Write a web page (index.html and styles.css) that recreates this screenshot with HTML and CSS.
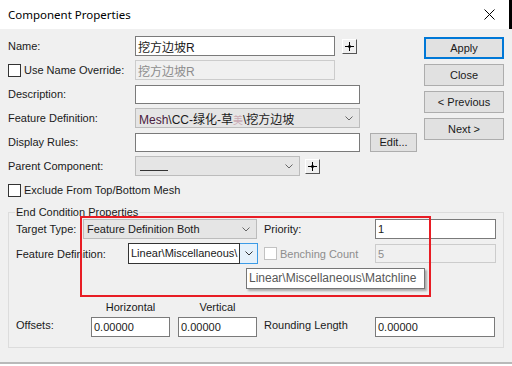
FILE: index.html
```html
<!DOCTYPE html>
<html lang="en">
<head>
    <meta charset="UTF-8">
    <meta name="viewport" content="width=device-width, initial-scale=1.0">
    <title>Component Properties</title>
    <link rel="stylesheet" href="styles.css">
</head>
<body>
    <div class="window">
        <div class="titlebar">
            <span class="title">Component Properties</span>
            <span class="close">
                <svg width="11" height="11" viewBox="0 0 11 11"><path d="M0.5 0.5 L10.5 10.5 M10.5 0.5 L0.5 10.5" stroke="#000" stroke-width="1"/></svg>
            </span>
        </div>

        <div class="dialog">
            <div class="main">
                <div class="form">
                    <div class="row">
                        <span class="label">Name:</span>
                        <div class="input w200 cjk">挖方边坡R</div>
                        <button class="pick pick-lg">
                            <svg width="9" height="9" viewBox="0 0 9 9"><path d="M4.5 0 V9 M0 4.5 H9" stroke="#000" stroke-width="1"/><path d="M4.5 2.5 L6.5 4.5 L4.5 6.5 L2.5 4.5 Z" fill="#000"/></svg>
                        </button>
                    </div>
                    <div class="row">
                        <label class="check label"><span class="box"></span>Use Name Override:</label>
                        <div class="input w200 disabled cjk">挖方边坡R</div>
                    </div>
                    <div class="row">
                        <span class="label">Description:</span>
                        <div class="input w225"></div>
                    </div>
                    <div class="row">
                        <span class="label">Feature Definition:</span>
                        <div class="select w225">
                            <span class="cjk"><span class="mesh">Mesh</span>\CC-绿化-草<span class="faint">美</span>\挖方边坡</span>
                            <svg class="chev" width="8" height="5" viewBox="0 0 8 5"><polyline points="0.5,0.5 4,4 7.5,0.5" fill="none" stroke="#666"/></svg>
                        </div>
                    </div>
                    <div class="row">
                        <span class="label">Display Rules:</span>
                        <div class="input w225"></div>
                        <button class="btn edit">Edit...</button>
                    </div>
                    <div class="row">
                        <span class="label">Parent Component:</span>
                        <div class="select w165">
                            <span class="blank"></span>
                            <svg class="chev" width="8" height="5" viewBox="0 0 8 5"><polyline points="0.5,0.5 4,4 7.5,0.5" fill="none" stroke="#666"/></svg>
                        </div>
                        <button class="pick">
                            <svg width="9" height="9" viewBox="0 0 9 9"><path d="M4.5 0 V9 M0 4.5 H9" stroke="#000" stroke-width="1"/><path d="M4.5 2.5 L6.5 4.5 L4.5 6.5 L2.5 4.5 Z" fill="#000"/></svg>
                        </button>
                    </div>
                    <div class="row">
                        <label class="check"><span class="box"></span>Exclude From Top/Bottom Mesh</label>
                    </div>
                </div>

                <div class="actions">
                    <button class="btn default">Apply</button>
                    <button class="btn">Close</button>
                    <button class="btn">&lt; Previous</button>
                    <button class="btn">Next &gt;</button>
                </div>
            </div>

            <fieldset class="group">
                <legend>End Condition Properties</legend>
                <div class="grow grow-a">
                    <div class="gleft">
                        <span class="glabel w67">Target Type:</span>
                        <div class="select w174 h20">
                            <span>Feature Definition Both</span>
                            <svg class="chev" width="8" height="5" viewBox="0 0 8 5"><polyline points="0.5,0.5 4,4 7.5,0.5" fill="none" stroke="#666"/></svg>
                        </div>
                    </div>
                    <span class="glabel w111">Priority:</span>
                    <div class="input w121 h20">1</div>
                </div>
                <div class="grow grow-b">
                    <div class="gleft">
                        <span class="glabel w112">Feature Definition:</span>
                        <div class="combo">
                            <div class="combo-edit">Linear\Miscellaneous\</div>
                            <div class="combo-btn">
                                <svg width="8" height="5" viewBox="0 0 8 5"><polyline points="0.5,0.5 4,4 7.5,0.5" fill="none" stroke="#333"/></svg>
                            </div>
                        </div>
                    </div>
                    <label class="check glabel w111 off"><span class="box"></span>Benching Count</label>
                    <div class="input w121 disabled">5</div>
                </div>
                <div class="heads">
                    <span class="head">Horizontal</span>
                    <span class="head">Vertical</span>
                </div>
                <div class="grow grow-e">
                    <div class="gleft">
                        <span class="glabel w75 lift">Offsets:</span>
                        <div class="input w79 h20">0.00000</div>
                        <div class="input w79 h20">0.00000</div>
                    </div>
                    <span class="glabel w111 lift">Rounding Length</span>
                    <div class="input w120 h20">0.00000</div>
                </div>
            </fieldset>
        </div>

        <div class="highlight"></div>
        <div class="tooltip">Linear\Miscellaneous\Matchline</div>
    </div>
</body>
</html>
```

FILE: styles.css
```css
body {
    margin: 0;
    background-color: #fff;
    font-family: 'Liberation Sans', 'Noto Sans CJK SC', sans-serif;
    font-size: 11px;
    color: #1a1a1a;
}
.window {
    position: relative;
    width: 512px;
    height: 366px;
    overflow: hidden;
}
.titlebar {
    height: 29px;
    display: flex;
    align-items: center;
    justify-content: space-between;
    padding-left: 8px;
    box-sizing: border-box;
    border-right: 3px solid #000;
    background-color: #fff;
}
.title {
    font-family: 'Noto Sans', sans-serif;
    font-size: 11.5px;
    color: #000;
}
.close {
    display: flex;
    margin-right: 14px;
}
.dialog {
    height: 335px;
    box-sizing: border-box;
    padding: 5px 8px 0 8px;
    background-color: #f0f0f0;
    border-bottom: 2px solid #b9b9b9;
}
.main {
    display: flex;
}
.form {
    width: 416px;
}
.row {
    height: 24px;
    display: flex;
    align-items: center;
}
.label {
    width: 127px;
    flex-shrink: 0;
}
.check {
    display: flex;
    align-items: center;
}
.box {
    width: 11px;
    height: 11px;
    border: 1px solid #333;
    background-color: #fff;
    margin-right: 3px;
}
.off {
    color: #8d8d8d;
}
.off .box {
    border-color: #c2c2c2;
}
.input {
    height: 19px;
    box-sizing: border-box;
    border: 1px solid #7a7a7a;
    background-color: #fff;
    padding-left: 2px;
    display: flex;
    align-items: center;
    white-space: nowrap;
    overflow: hidden;
}
.input.disabled {
    background-color: #f0f0f0;
    border-color: #cccccc;
    color: #8d8d8d;
}
.cjk {
    font-size: 12px;
}
.h20 { height: 20px; }
.w200 { width: 200px; height: 20px; }
.w225 { width: 225px; }
.w165 { width: 165px; }
.w174 { width: 174px; }
.w121 { width: 121px; }
.w120 { width: 120px; }
.w79 { width: 79px; }
.select {
    height: 20px;
    box-sizing: border-box;
    border: 1px solid #bcbcbc;
    background-color: #e5e5e5;
    padding: 0 6px 0 3px;
    display: flex;
    align-items: center;
    justify-content: space-between;
    white-space: nowrap;
}
.mesh {
    color: #4a2040;
}
.faint {
    color: #c9a9b4;
    font-size: 10px;
}
.blank {
    width: 28px;
    height: 9px;
    margin-left: 1px;
    border-bottom: 1px solid #333;
}
.chev {
    flex-shrink: 0;
}
.pick {
    width: 15px;
    height: 15px;
    margin-left: 5px;
    padding: 0;
    display: flex;
    align-items: center;
    justify-content: center;
    background-color: #f0f0f0;
    border: 1px solid;
    border-color: #fff #555 #555 #fff;
}
.pick-lg {
    margin-left: 7px;
}
.btn {
    height: 22px;
    padding: 0;
    font-family: inherit;
    font-size: 11px;
    color: #1a1a1a;
    background-color: #e1e1e1;
    border: 1px solid #adadad;
}
.btn.default {
    border-color: #0078d7;
    box-shadow: inset 0 0 0 1px #0078d7;
}
.edit {
    width: 47px;
    height: 19px;
    margin-left: 10px;
}
.actions {
    width: 80px;
    padding-top: 3px;
    display: flex;
    flex-direction: column;
    gap: 5px;
}
.group {
    margin: 4px 0 0 0;
    padding: 0 7px 10px 7px;
    border: 1px solid #dcdcdc;
    width: 496px;
    box-sizing: border-box;
}
.group legend {
    padding: 0 1px;
    margin-left: -1px;
    line-height: 13px;
}
.grow {
    display: flex;
    align-items: center;
}
.grow-a {
    height: 20px;
}
.grow-b {
    height: 21px;
    margin-top: 4px;
}
.grow-e {
    height: 20px;
    margin-top: 3px;
}
.gleft {
    width: 248px;
    display: flex;
    align-items: center;
}
.glabel {
    flex-shrink: 0;
}
.lift {
    margin-top: -5px;
}
.w67 { width: 67px; }
.w75 { width: 75px; }
.w111 { width: 111px; }
.w112 { width: 112px; }
.grow-e .gleft .input + .input {
    margin-left: 8px;
}
.combo {
    display: flex;
    height: 21px;
}
.combo-edit {
    width: 112px;
    box-sizing: border-box;
    border: 1px solid #333;
    background-color: #fff;
    padding-left: 2px;
    line-height: 19px;
    white-space: nowrap;
    overflow: hidden;
}
.combo-btn {
    width: 18px;
    box-sizing: border-box;
    border: 1px solid #3c9be6;
    border-left: none;
    background-color: #e5f1fb;
    display: flex;
    align-items: center;
    justify-content: center;
}
.heads {
    display: flex;
    margin: 36px 0 0 75px;
    gap: 8px;
    height: 14px;
    align-items: center;
}
.head {
    width: 79px;
    text-align: center;
}
.highlight {
    position: absolute;
    left: 80px;
    top: 216px;
    width: 351px;
    height: 81px;
    box-sizing: border-box;
    border: 2px solid #e81c24;
}
.tooltip {
    position: absolute;
    left: 246px;
    top: 268px;
    width: 179px;
    height: 21px;
    box-sizing: border-box;
    border: 1px solid #767676;
    background-color: #fff;
    box-shadow: 2px 2px 2px rgba(0, 0, 0, 0.3);
    padding-left: 2px;
    font-size: 12px;
    line-height: 19px;
    color: #575757;
    white-space: nowrap;
}
```
